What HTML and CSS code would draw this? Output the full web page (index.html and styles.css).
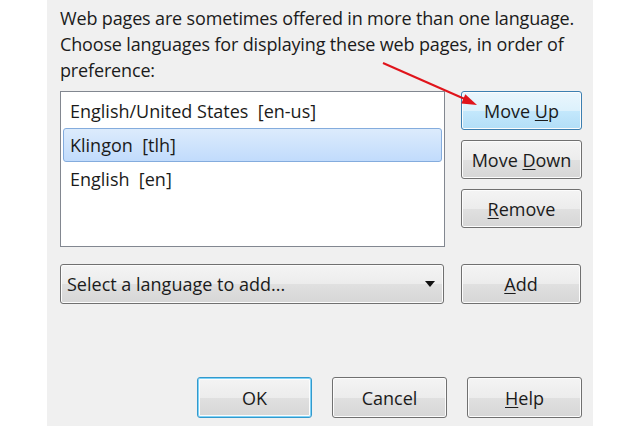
FILE: index.html
```html
<!DOCTYPE html>
<html>
<head>
    <meta charset="UTF-8">
    <title>Languages</title>
    <link rel="stylesheet" href="styles.css">
</head>
<body>
    <div class="dialog">
        <p class="intro">Web pages are sometimes offered in more than one language. Choose languages for displaying these web pages, in order of preference:</p>

        <div class="langrow">
            <div class="langlist">
                <div class="item">English/United States&nbsp; [en-us]</div>
                <div class="item selected">Klingon&nbsp; [tlh]</div>
                <div class="item">English&nbsp; [en]</div>
            </div>
            <div class="sidebtns">
                <button class="btn hover">Move <u>U</u>p</button>
                <button class="btn">Move <u>D</u>own</button>
                <button class="btn"><u>R</u>emove</button>
            </div>
        </div>

        <div class="addrow">
            <div class="picker">
                <span>Select a language to add...</span>
                <span class="caret"></span>
            </div>
            <button class="btn"><u>A</u>dd</button>
        </div>

        <div class="footer">
            <button class="btn default">OK</button>
            <button class="btn">Cancel</button>
            <button class="btn"><u>H</u>elp</button>
        </div>

        <!-- red annotation arrow -->
        <svg class="arrow" width="120" height="60" viewBox="0 0 120 60">
            <line x1="4" y1="4" x2="88" y2="41" stroke="#e0141b" stroke-width="2"/>
            <polygon points="98,46 82.3,44.5 86.3,35.3" fill="#e0141b"/>
        </svg>
    </div>
</body>
</html>
```

FILE: styles.css
```css
body {
    margin: 0;
    background: #fff;
    font-family: "Open Sans", "Noto Sans", sans-serif;
    color: #1b1b1b;
}

.dialog {
    position: relative;
    margin-left: 47px;
    width: 546px;
    height: 426px;
    box-sizing: border-box;
    padding: 5px 11px 0 13px;
    background: #f0f0f0;
}

.intro {
    margin: 0;
    font-size: 18px;
    line-height: 26px;
    letter-spacing: -0.15px;
}

.langrow {
    display: flex;
    gap: 16px;
    margin-top: 8px;
}

.langlist {
    width: 385px;
    height: 156px;
    box-sizing: border-box;
    padding: 2px 2px;
    background: #fff;
    border: 1px solid #828790;
}

.item {
    height: 34px;
    line-height: 32px;
    padding-left: 6px;
    font-size: 18px;
    border: 1px solid transparent;
    box-sizing: border-box;
}

.item.selected {
    background: linear-gradient(#dcebfc, #c1dbfc);
    border-color: #84acdd;
    border-radius: 3px;
}

.sidebtns {
    display: flex;
    flex-direction: column;
    gap: 10px;
}

.btn {
    width: 121px;
    height: 39px;
    padding: 0;
    font-family: inherit;
    font-size: 18px;
    color: #1b1b1b;
    border: 1px solid #707070;
    border-radius: 3px;
    background: linear-gradient(#f4f4f4 0%, #ececec 50%, #e0e0e0 51%, #d6d6d6 100%);
    box-shadow: inset 0 0 0 1px #fcfcfc;
}

.btn u {
    text-underline-offset: 2px;
}

.btn.hover {
    border-color: #3c7fb1;
    background: linear-gradient(#eaf6fd 0%, #dcf1fc 50%, #c4e8fc 51%, #b2def7 100%);
}

.addrow {
    display: flex;
    gap: 17px;
    margin-top: 17px;
}

.addrow .btn {
    width: 120px;
    height: 40px;
}

.picker {
    width: 384px;
    height: 40px;
    box-sizing: border-box;
    display: flex;
    align-items: center;
    justify-content: space-between;
    padding: 0 8px 0 6px;
    font-size: 18px;
    border: 1px solid #707070;
    border-radius: 3px;
    background: linear-gradient(#f4f4f4 0%, #ececec 50%, #e0e0e0 51%, #d6d6d6 100%);
    box-shadow: inset 0 0 0 1px #fcfcfc;
}

.caret {
    width: 0;
    height: 0;
    border-left: 5px solid transparent;
    border-right: 5px solid transparent;
    border-top: 6px solid #111;
}

.footer {
    display: flex;
    justify-content: flex-end;
    gap: 20px;
    margin-top: 73px;
}

.footer .btn {
    width: 115px;
    height: 41px;
}

.btn.default {
    border-color: #3399cc;
    box-shadow: inset 0 0 0 1px #7fd3f8, inset 0 0 0 2px #fcfcfc;
}

.arrow {
    position: absolute;
    left: 332px;
    top: 59px;
}
```
